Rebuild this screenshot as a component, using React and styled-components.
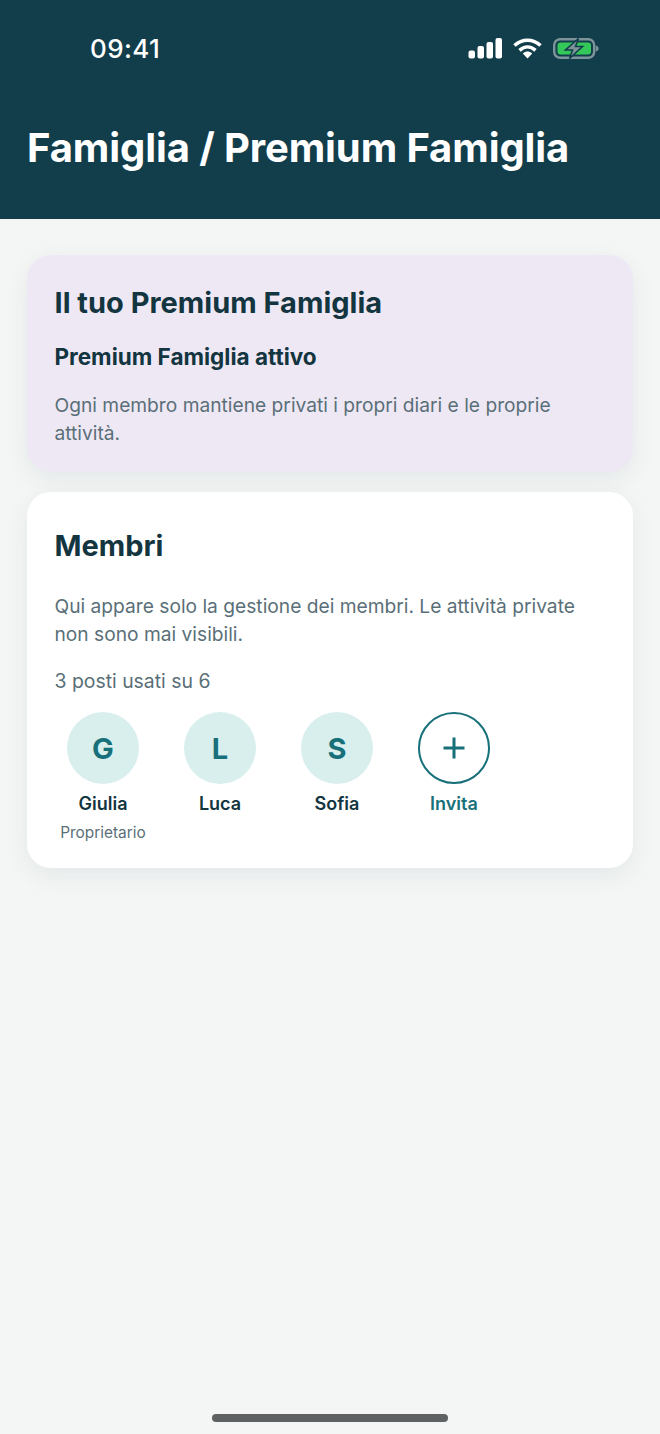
import styled, { createGlobalStyle } from "styled-components";

const GlobalStyle = createGlobalStyle`
    * {
        box-sizing: border-box;
    }
    body {
        margin: 0;
        background: #F4F6F5;
        font-family: Inter, "Noto Sans", sans-serif;
    }
`

const members = [
    { initial: "G", name: "Giulia", role: "Proprietario" },
    { initial: "L", name: "Luca" },
    { initial: "S", name: "Sofia" },
]

function StatusIcons() {
    return (
        <Icons>
            <svg width="34" height="21" viewBox="0 0 34 21">
                <rect x="0.5" y="12.5" width="6.5" height="8" rx="2" fill="#fff" />
                <rect x="9.5" y="8" width="6.5" height="12.5" rx="2" fill="#fff" />
                <rect x="18.5" y="4" width="6.5" height="16.5" rx="2" fill="#fff" />
                <rect x="27.5" y="0" width="6.5" height="20.5" rx="2" fill="#fff" />
            </svg>
            <svg width="29" height="21" viewBox="0 0 29 21">
                <path d="M1.5 7.5C9 0.5 20 0.5 27.5 7.5" stroke="#fff" strokeWidth="3.6" fill="none" />
                <path d="M6.5 12.4C11.5 7.8 17.5 7.8 22.5 12.4" stroke="#fff" strokeWidth="3.6" fill="none" />
                <path d="M9.8 15.4C13 12.8 16 12.8 19.2 15.4L14.5 20.5Z" fill="#fff" />
            </svg>
            <svg width="46" height="21" viewBox="0 0 46 21">
                <rect x="1.2" y="1.2" width="40" height="18.6" rx="6" fill="none" stroke="#7E949B" strokeWidth="2.4" />
                <rect x="4.5" y="4.5" width="33.5" height="12" rx="3" fill="#34C759" />
                <path d="M42.8 7.5C44.6 8 45.6 9 45.6 10.5C45.6 12 44.6 13 42.8 13.5Z" fill="#7E949B" />
                <path d="M25.5 0.5L12.5 12H19.5L16.5 20.5L29.5 8.5H22.5Z" fill="#7E949B" stroke="#123E4C" strokeWidth="1.6" />
            </svg>
        </Icons>
    )
}

export default function App() {
    return (
        <Page>
            <GlobalStyle />
            <Header>
                <StatusBar>
                    <Clock>09:41</Clock>
                    <StatusIcons />
                </StatusBar>
                <Title>Famiglia / Premium Famiglia</Title>
            </Header>

            <Content>
                <PremiumCard>
                    <CardTitle>Il tuo Premium Famiglia</CardTitle>
                    <Subtitle>Premium Famiglia attivo</Subtitle>
                    <Description>
                        Ogni membro mantiene privati i propri diari e le proprie attività.
                    </Description>
                </PremiumCard>

                <MembersCard>
                    <CardTitle>Membri</CardTitle>
                    <MembersNote>
                        Qui appare solo la gestione dei membri. Le attività private non sono mai visibili.
                    </MembersNote>
                    <Seats>3 posti usati su 6</Seats>
                    <MemberRow>
                        {members.map(el =>
                            <Member key={el.name}>
                                <Avatar>{el.initial}</Avatar>
                                <MemberName>{el.name}</MemberName>
                                {el.role && <Role>{el.role}</Role>}
                            </Member>
                        )}
                        <Member>
                            <InviteCircle>
                                <svg width="24" height="24" viewBox="0 0 24 24">
                                    <path d="M12 1.5V22.5M1.5 12H22.5" stroke="#17707A" strokeWidth="3" />
                                </svg>
                            </InviteCircle>
                            <MemberName invite={1}>Invita</MemberName>
                        </Member>
                    </MemberRow>
                </MembersCard>
            </Content>

            <HomeBar />
        </Page>
    )
}

const Page = styled.div`
    width: 660px;
    height: 1434px;
    display: flex;
    flex-direction: column;
    background: #F4F6F5;
    overflow: hidden;
`

const Header = styled.header`
    height: 219px;
    flex-shrink: 0;
    background: #123E4C;
    color: #FFFFFF;
    padding: 31px 27px 0;
`

const StatusBar = styled.div`
    height: 34px;
    display: flex;
    justify-content: space-between;
    align-items: center;
    padding: 0 34px 0 63px;
`

const Clock = styled.span`
    font-size: 26px;
    font-weight: 500;
    letter-spacing: 0.4px;
`

const Icons = styled.div`
    display: flex;
    align-items: center;
    gap: 11px;
    svg {
        display: block;
    }
`

const Title = styled.h1`
    margin: 58px 0 0;
    font-size: 40px;
    line-height: 50px;
    font-weight: 700;
    letter-spacing: -0.1px;
    white-space: nowrap;
`

const Content = styled.main`
    flex: 1;
    display: flex;
    flex-direction: column;
    gap: 20px;
    padding: 36px 27px 0;
`

const Card = styled.section`
    border-radius: 24px;
    padding: 27px 27px 27px 27.5px;
    box-shadow: 0 8px 24px rgba(18, 62, 76, 0.07);
`

const PremiumCard = styled(Card)`
    height: 217px;
    background: #EEE8F5;
    padding-top: 29px;
`

const MembersCard = styled(Card)`
    height: 376px;
    background: #FFFFFF;
    padding-top: 35px;
`

const CardTitle = styled.h2`
    margin: 0;
    font-size: 29px;
    line-height: 38px;
    font-weight: 700;
    color: #133540;
`

const Subtitle = styled.h3`
    margin: 21px 0 0;
    font-size: 22.5px;
    line-height: 28px;
    font-weight: 700;
    color: #133540;
`

const Description = styled.p`
    margin: 20px 0 0;
    font-size: 19.2px;
    line-height: 28px;
    color: #5A6F78;
`

const MembersNote = styled(Description)`
    margin-top: 27px;
`

const Seats = styled.p`
    margin: 19px 0 0;
    font-size: 19.4px;
    line-height: 28px;
    color: #5A6F78;
`

const MemberRow = styled.div`
    display: flex;
    gap: 19px;
    margin: 17px 0 0 -0.5px;
`

const Member = styled.div`
    width: 98px;
    display: flex;
    flex-direction: column;
    align-items: center;
`

const Avatar = styled.div`
    width: 72px;
    height: 72px;
    border-radius: 50%;
    display: flex;
    align-items: center;
    justify-content: center;
    background: #D9EFED;
    color: #17707A;
    font-size: 29px;
    font-weight: 700;
`

const InviteCircle = styled(Avatar)`
    background: transparent;
    border: 2.5px solid #17707A;
`

const MemberName = styled.span`
    margin-top: 8px;
    font-size: 18px;
    line-height: 24px;
    font-weight: 600;
    color: ${props => props.invite ? "#17707A" : "#133540"};
`

const Role = styled.span`
    margin-top: 7px;
    font-size: 15.4px;
    line-height: 20px;
    color: #5A6F78;
    white-space: nowrap;
`

const HomeBar = styled.div`
    width: 236px;
    height: 8px;
    flex-shrink: 0;
    align-self: center;
    margin-bottom: 12px;
    border-radius: 4px;
    background: #5E6262;
`
